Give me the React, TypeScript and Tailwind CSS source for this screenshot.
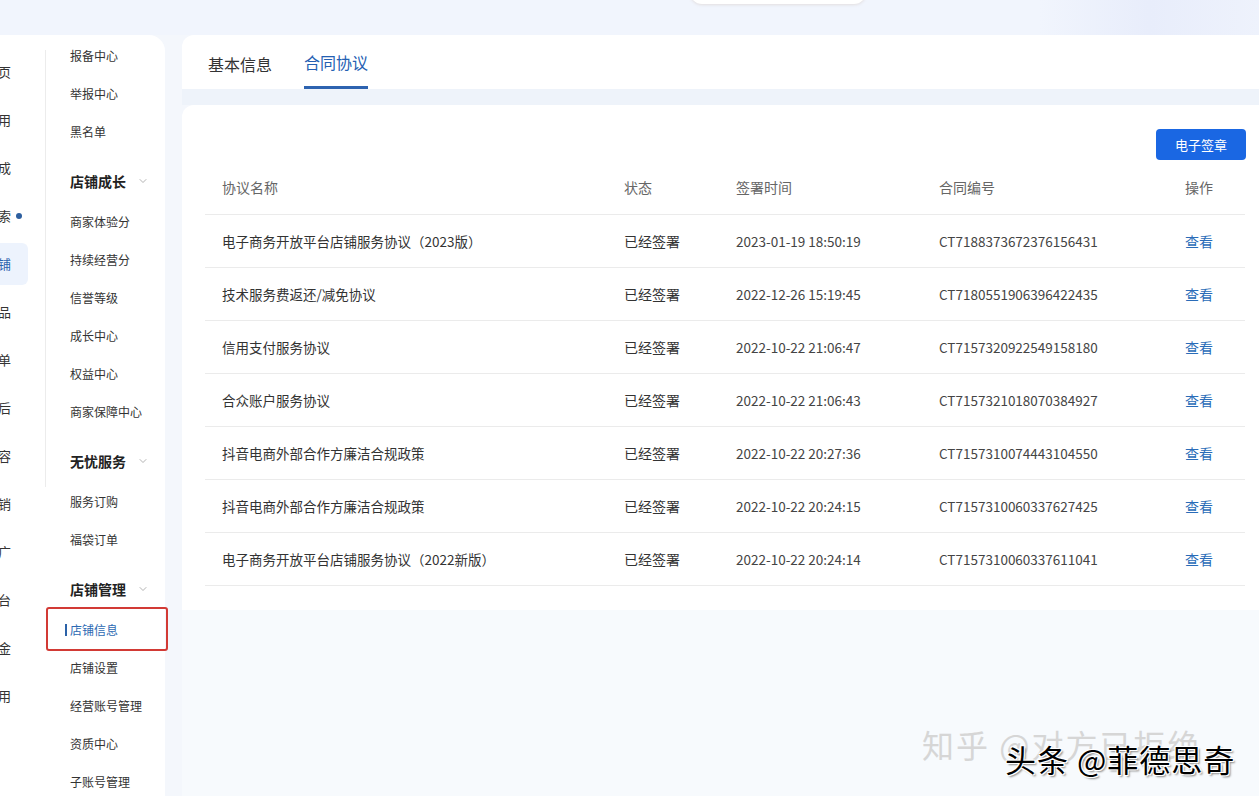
import {ChevronDown} from "lucide-react";

const railItems=[
  {label:"首页"},
  {label:"应用"},
  {label:"达成"},
  {label:"探索", dot:true},
  {label:"店铺", active:true},
  {label:"商品"},
  {label:"订单"},
  {label:"售后"},
  {label:"内容"},
  {label:"营销"},
  {label:"推广"},
  {label:"平台"},
  {label:"资金"},
  {label:"费用"},
];

type MenuEntry={label:string; header?:boolean; active?:boolean};

const menu: MenuEntry[]=[
  {label:"报备中心"},
  {label:"举报中心"},
  {label:"黑名单"},
  {label:"店铺成长", header:true},
  {label:"商家体验分"},
  {label:"持续经营分"},
  {label:"信誉等级"},
  {label:"成长中心"},
  {label:"权益中心"},
  {label:"商家保障中心"},
  {label:"无忧服务", header:true},
  {label:"服务订购"},
  {label:"福袋订单"},
  {label:"店铺管理", header:true},
  {label:"店铺信息", active:true},
  {label:"店铺设置"},
  {label:"经营账号管理"},
  {label:"资质中心"},
  {label:"子账号管理"},
];

const rows=[
  ["电子商务开放平台店铺服务协议（2023版）", "2023-01-19 18:50:19", "CT7188373672376156431"],
  ["技术服务费返还/减免协议", "2022-12-26 15:19:45", "CT7180551906396422435"],
  ["信用支付服务协议", "2022-10-22 21:06:47", "CT7157320922549158180"],
  ["合众账户服务协议", "2022-10-22 21:06:43", "CT7157321018070384927"],
  ["抖音电商外部合作方廉洁合规政策", "2022-10-22 20:27:36", "CT7157310074443104550"],
  ["抖音电商外部合作方廉洁合规政策", "2022-10-22 20:24:15", "CT7157310060337627425"],
  ["电子商务开放平台店铺服务协议（2022新版）", "2022-10-22 20:24:14", "CT7157310060337611041"],
];

const cols="grid grid-cols-[402px_112px_203px_246px_77px]";

function Rail(){
  return (
    <div className="w-[45px] overflow-hidden pt-[13px] text-[13px] text-[#333]">
      {railItems.map((it)=>(
        <div key={it.label} className="h-[48px] flex items-center">
          {it.active ? (
            <div className="h-[42px] w-[28px] bg-[#edf3fd] rounded-r-[6px] flex items-center">
              <span className="ml-[-15px] text-[#2b63ad] whitespace-nowrap">{it.label}</span>
            </div>
          ) : (
            <>
              <span className="ml-[-15px] whitespace-nowrap">{it.label}</span>
              {it.dot && <span className="ml-[5px] w-[6px] h-[6px] rounded-full bg-[#2d5f9f]" />}
            </>
          )}
        </div>
      ))}
    </div>
  );
}

function Menu(){
  return (
    <div className="pl-[24px] pt-[2px]">
      {menu.map((m)=>{
        if(m.header){
          return (
            <div key={m.label} className="h-[52px] pt-[19px] flex items-start">
              <div className="h-[22px] flex items-center gap-[11px]">
                <span className="text-[14px] font-bold text-[#222]">{m.label}</span>
                <ChevronDown size={12} strokeWidth={1.5} className="text-[#999]" />
              </div>
            </div>
          );
        }
        if(m.active){
          return (
            <div key={m.label} className="h-[38px] flex items-center text-[12px] text-[#2d6ab3]">
              <span className="ml-[-5px] mr-[3px] w-[2px] h-[12px] bg-[#2b62a8]" />
              {m.label}
            </div>
          );
        }
        return (
          <div key={m.label} className="h-[38px] flex items-center text-[12px] text-[#333]">
            {m.label}
          </div>
        );
      })}
    </div>
  );
}

export default function App(){
  return (
    <div className="relative w-[1259px] h-[796px] overflow-hidden bg-[#f4f7fc] font-['Noto_Sans_CJK_SC','Noto_Sans',sans-serif]">
      <div className="h-[35px] bg-[#f1f5fd] flex">
        <div className="ml-[690px] mt-[-20px] h-[24px] w-[176px] rounded-full bg-white shadow-[0_1px_3px_rgba(200,180,170,0.35)]" />
        <div className="ml-auto w-[220px] h-full bg-gradient-to-r from-[#f1f5fd] via-[#e8edfb] to-[#eef2fc]" />
      </div>

      <div className="flex h-[761px]">
        <div className="w-[165px] bg-white rounded-tr-[16px] flex">
          <Rail />
          <div className="w-px h-[437px] mt-[15px] bg-[#ececec]" />
          <Menu />
        </div>

        <div className="ml-[17px] flex-1 flex flex-col">
          <div className="h-[54px] bg-white rounded-tl-[12px] flex items-start pl-[26px] gap-[32px]">
            <div className="h-[54px] pt-[3px] flex items-center text-[16px] text-[#333]">基本信息</div>
            <div className="h-[54px] pt-[3px] flex items-center text-[16px] text-[#2460b2] border-b-[3px] border-[#2d63b0]">合同协议</div>
          </div>

          <div className="h-[16px] bg-[#eef3fa]" />

          <div className="h-[505px] bg-white rounded-tl-[12px] pl-[23px] pr-[13px] pt-[24px]">
            <div className="flex justify-end">
              <button className="w-[90px] h-[31px] bg-[#1a67e3] text-white text-[13px] rounded-[4px]">电子签章</button>
            </div>
            <div className="w-[1040px]">
              <div className={`${cols} h-[55px] items-center border-b border-[#ebebeb] text-[14px] text-[#666]`}>
                <div className="pl-[17px]">协议名称</div>
                <div className="pl-[17px]">状态</div>
                <div className="pl-[17px]">签署时间</div>
                <div className="pl-[17px]">合同编号</div>
                <div className="pl-[17px]">操作</div>
              </div>
              {rows.map((r, i)=>(
                <div key={i} className={`${cols} h-[53px] items-center border-b border-[#ebebeb] text-[13.5px] text-[#333]`}>
                  <div className="pl-[17px] whitespace-nowrap">{r[0]}</div>
                  <div className="pl-[17px] text-[14px]">已经签署</div>
                  <div className="pl-[17px] text-[#444]">{r[1]}</div>
                  <div className="pl-[17px] text-[#444]">{r[2]}</div>
                  <div className="pl-[17px] text-[14px] text-[#2a6cb8]">查看</div>
                </div>
              ))}
            </div>
          </div>

          <div className="flex-1 bg-[#f7fafd]" />
        </div>
      </div>

      <div className="absolute left-[46px] top-[607px] w-[122px] h-[44px] border-2 border-[#d23a35] rounded-[3px]" />

      <div className="absolute left-[922px] top-[722px] text-[32px] leading-[44px] text-[#d6d6d6] whitespace-nowrap tracking-[2px]">
        知乎 @对方已拒绝
      </div>
      <div className="absolute left-[1005px] top-[739px] text-[31px] leading-[40px] text-black whitespace-nowrap tracking-[1px] [text-shadow:1px_1px_0_#fff,-1px_-1px_0_#fff,1px_-1px_0_#fff,-1px_1px_0_#fff,2px_2px_2px_#888]">
        头条 @菲德思奇
      </div>
    </div>
  );
}
